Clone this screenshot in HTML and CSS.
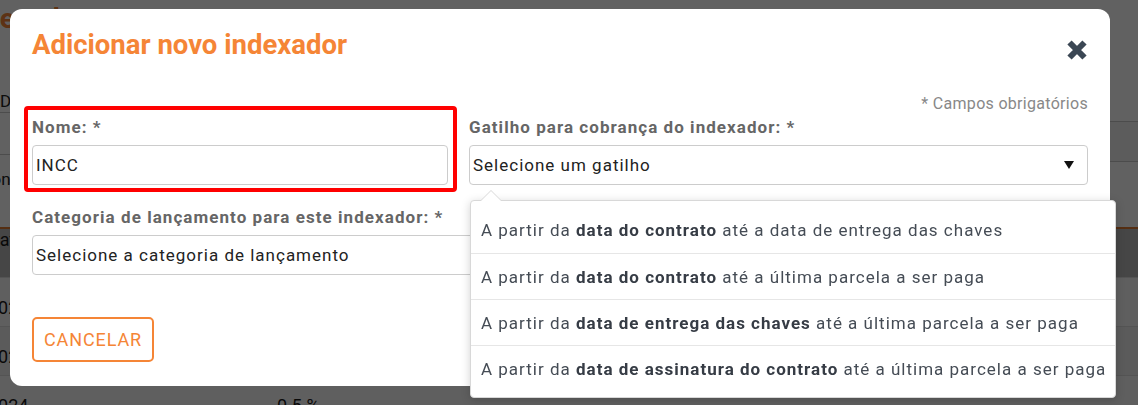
FILE: index.html
```html
<!DOCTYPE html>
<html lang="pt-BR">
<head>
<meta charset="utf-8">
<title>Adicionar novo indexador</title>
<link rel="stylesheet" href="styles.css">
</head>
<body>
<div class="page">
  <header class="page-head"><h1 class="page-title">Indexadores</h1></header>
  <div class="tabs"><span class="tab">Dados gerais</span></div>
  <div class="search-row">
    <div class="search-left"></div>
    <div class="search">Pesquisar</div>
  </div>
  <div class="sub">Icone</div>
  <div class="table">
    <div class="thead"><span class="cell c1">Data</span><span class="cell c2">Valor</span></div>
    <div class="row"><span class="cell c1">2024</span><span class="cell c2">0.3 %</span></div>
    <div class="row"><span class="cell c1">2024</span><span class="cell c2">0.4 %</span></div>
    <div class="row"><span class="cell c1">2024</span><span class="cell c2">0.5 %</span></div>
  </div>
</div>
<div class="overlay"></div>
<div class="modal" role="dialog">
  <div class="modal-header">
    <h2 class="modal-title">Adicionar novo indexador</h2>
    <button class="close" type="button" aria-label="Fechar">
      <svg width="20" height="20" viewBox="0 0 20 20"><path d="M2.5 2.5 L17.5 17.5 M17.5 2.5 L2.5 17.5" stroke="#3b4754" stroke-width="6" stroke-linecap="butt"/></svg>
    </button>
  </div>
  <p class="required-note">* Campos obrigatórios</p>
  <div class="form-grid">
    <div class="field field-highlight">
      <label class="label">Nome: *</label>
      <div class="control">INCC</div>
    </div>
    <div class="field">
      <label class="label">Gatilho para cobrança do indexador: *</label>
      <div class="control select">
        <span>Selecione um gatilho</span>
        <svg class="caret" width="10" height="8" viewBox="0 0 10 8"><path d="M0 0 H10 L5 8 Z" fill="#111"/></svg>
        <ul class="dropdown">
          <li>A partir da <b>data do contrato</b> até a data de entrega das chaves</li>
          <li>A partir da <b>data do contrato</b> até a última parcela a ser paga</li>
          <li>A partir da <b>data de entrega das chaves</b> até a última parcela a ser paga</li>
          <li>A partir da <b>data de assinatura do contrato</b> até a última parcela a ser paga</li>
        </ul>
      </div>
    </div>
    <div class="field field-wide">
      <label class="label">Categoria de lançamento para este indexador: *</label>
      <div class="control">Selecione a categoria de lançamento</div>
    </div>
  </div>
  <div class="actions"><button class="btn-outline" type="button">CANCELAR</button></div>
</div>
</body>
</html>
```
FILE: styles.css
```css
* { box-sizing: border-box; }
html, body { margin: 0; }
body {
  width: 1138px;
  height: 405px;
  overflow: hidden;
  background: #fff;
  font-family: Roboto, "Liberation Sans", sans-serif;
  color: #333;
}

/* background page */
.page-head { height: 40px; padding-top: 3px; }
.page-title {
  margin: 0;
  font-size: 28px;
  line-height: 32px;
  font-weight: 700;
  color: #f58536;
  text-indent: -40px;
  white-space: nowrap;
}
.tabs {
  margin-top: 50px;
  height: 23px;
  width: 300px;
  border-bottom: 1px solid #c8c8c8;
  font-size: 17px;
  line-height: 22px;
  color: #222;
}
.search-row { display: flex; height: 48px; }
.search-left { flex: 1; border-bottom: 1px solid #c8c8c8; height: 42px; }
.search {
  width: 160px;
  margin-top: 8px;
  height: 41px;
  border-top: 1px solid #c8c8c8;
  border-bottom: 1px solid #c8c8c8;
  font-size: 17px;
  line-height: 39px;
  padding-left: 2px;
  color: #444;
  background: #f1f1f1;
}
.sub { height: 66px; font-size: 17px; color: #222; padding-top: 8px; text-indent: -22px; }
.table { font-size: 18px; color: #1a1a1a; }
.thead {
  display: flex;
  height: 50px;
  background: #b8b8b8;
  border-top: 2px solid #e07a30;
}
.row { display: flex; height: 49px; align-items: center; border-top: 1px solid #ddd; background: #fafafa; }
.row:nth-child(odd) { background: #f0f0f0; }
.cell.c1 { width: 277px; text-indent: -12px; }
.row .cell { padding-top: 10px; }

.overlay {
  position: fixed;
  inset: 0;
  background: rgba(0, 0, 0, 0.62);
}

/* modal */
.modal {
  position: fixed;
  left: 10px;
  top: 9px;
  width: 1100px;
  height: 377px;
  background: #fff;
  border-radius: 12px;
  padding: 21px 22px 23px;
}
.modal-header { display: flex; justify-content: space-between; align-items: flex-start; }
.modal-title {
  margin: 0;
  font-size: 27.5px;
  line-height: 30px;
  font-weight: 700;
  color: #f58536;
}
.close {
  border: 0;
  background: none;
  padding: 0;
  margin: 10px 1px 0 0;
  width: 20px;
  height: 20px;
  display: block;
}
.close svg { display: block; }
.required-note {
  margin: 35px 0 0;
  text-align: right;
  font-size: 16px;
  line-height: 18px;
  letter-spacing: 0.3px;
  color: #888;
}
.form-grid {
  margin-top: 4px;
  display: grid;
  grid-template-columns: 416px 1fr;
  column-gap: 21px;
  row-gap: 22px;
}
.field { position: relative; }
.field-wide { grid-column: 1 / -1; }
.field-highlight::after {
  content: "";
  position: absolute;
  top: -11px;
  bottom: -7px;
  left: -8px;
  right: -9px;
  border: 4px solid #ff0000;
  border-radius: 4px;
  pointer-events: none;
}
.label {
  display: block;
  font-size: 17px;
  line-height: 20px;
  font-weight: 700;
  letter-spacing: 1.05px;
  color: #666;
  margin-bottom: 8px;
}
.control {
  position: relative;
  height: 40px;
  border: 1px solid #ccc;
  border-radius: 4px;
  padding: 0 3px;
  font-size: 17px;
  letter-spacing: 1px;
  line-height: 38px;
  color: #222;
}
.select { display: flex; justify-content: space-between; align-items: center; }
.caret { margin-right: 10px; }

.dropdown {
  position: absolute;
  top: 54px;
  left: 0;
  width: 646px;
  margin: 0;
  padding: 6px 0 6px;
  list-style: none;
  background: #fff;
  border: 1px solid #d8d8d8;
  border-radius: 4px;
  box-shadow: 0 2px 10px rgba(0, 0, 0, 0.18);
  z-index: 5;
}
.dropdown::before,
.dropdown::after {
  content: "";
  position: absolute;
  left: 10px;
  width: 0;
  height: 0;
  border-left: 10px solid transparent;
  border-right: 10px solid transparent;
}
.dropdown::before { top: -11px; border-bottom: 10px solid #d8d8d8; }
.dropdown::after { top: -10px; border-bottom: 10px solid #fff; }
.dropdown li {
  height: 46px;
  padding-left: 10px;
  font-size: 17px;
  letter-spacing: 1px;
  line-height: 46px;
  color: #454c55;
  white-space: nowrap;
}
.dropdown li + li { border-top: 1px solid #e6e6e6; }
.dropdown b { font-weight: 700; color: #363c45; }

.actions { margin-top: 42px; }
.btn-outline {
  height: 45px;
  width: 122px;
  border: 2px solid #f58536;
  border-radius: 5px;
  background: #fff;
  color: #f58536;
  font-family: Roboto, "Liberation Sans", sans-serif;
  font-size: 18px;
  letter-spacing: 0.9px;
  padding: 0;
}
```
